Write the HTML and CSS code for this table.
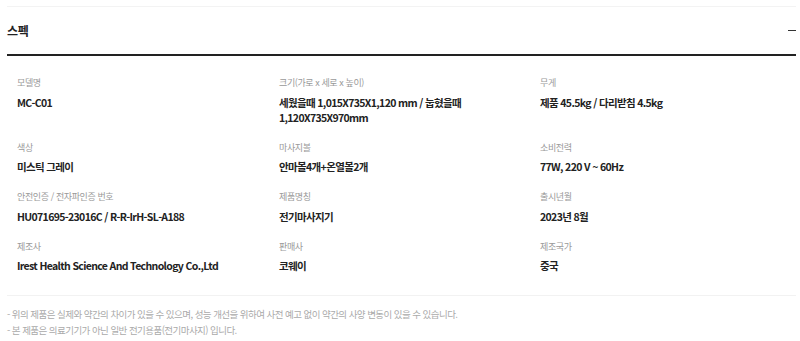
FILE: index.html
```html
<!DOCTYPE html>
<html lang="ko">
<head>
<meta charset="utf-8">
<link rel="stylesheet" href="styles.css">
</head>
<body>
<section class="spec">
  <div class="head">
    <h2 class="title">스펙</h2>
    <span class="minus"></span>
  </div>
  <div class="grid">
    <div class="item"><div class="label">모델명</div><div class="value">MC-C01</div></div>
    <div class="item"><div class="label">크기(가로 x 세로 x 높이)</div><div class="value">세웠을때 1,015X735X1,120 mm / 눕혔을때 1,120X735X970mm</div></div>
    <div class="item"><div class="label">무게</div><div class="value">제품 45.5kg / 다리받침 4.5kg</div></div>
    <div class="item"><div class="label">색상</div><div class="value">미스틱 그레이</div></div>
    <div class="item"><div class="label">마사지볼</div><div class="value">안마볼4개+온열볼2개</div></div>
    <div class="item"><div class="label">소비전력</div><div class="value">77W, 220 V ~ 60Hz</div></div>
    <div class="item"><div class="label">안전인증 / 전자파인증 번호</div><div class="value">HU071695-23016C / R-R-IrH-SL-A188</div></div>
    <div class="item"><div class="label">제품명칭</div><div class="value">전기마사지기</div></div>
    <div class="item"><div class="label">출시년월</div><div class="value">2023년 8월</div></div>
    <div class="item"><div class="label">제조사</div><div class="value">Irest Health Science And Technology Co.,Ltd</div></div>
    <div class="item"><div class="label">판매사</div><div class="value">코웨이</div></div>
    <div class="item"><div class="label">제조국가</div><div class="value">중국</div></div>
  </div>
  <ul class="notes">
    <li>- 위의 제품은 실제와 약간의 차이가 있을 수 있으며, 성능 개선을 위하여 사전 예고 없이 약간의 사양 변동이 있을 수 있습니다.</li>
    <li>- 본 제품은 의료기기가 아닌 일반 전기용품(전기마사지) 입니다.</li>
  </ul>
</section>
</body>
</html>
```

FILE: styles.css
```css
* { box-sizing: border-box; }
html, body { margin: 0; padding: 0; background: #fff; }
body {
  font-family: "Noto Sans CJK KR", "Noto Sans", sans-serif;
  color: #222;
}
.spec {
  margin: 6px 4px 0 7px;
  border-top: 1px solid #f3f3f3;
}
.head {
  height: 49px;
  display: flex;
  align-items: center;
  justify-content: space-between;
  border-bottom: 2px solid #222;
}
.title {
  margin: 0;
  font-size: 12px;
  font-weight: 700;
  letter-spacing: -0.3px;
  line-height: 16px;
  color: #222;
}
.minus {
  width: 8px;
  height: 1.5px;
  background: #333;
}
.grid {
  display: grid;
  grid-template-columns: 262px 261px 1fr;
  row-gap: 16px;
  padding: 20px 0 22px 10px;
}
.item { padding-right: 12px; }
.label {
  font-size: 9px;
  line-height: 14px;
  letter-spacing: -0.4px;
  color: #999;
}
.value {
  margin-top: 4.5px;
  font-size: 10.5px;
  line-height: 15px;
  font-weight: 700;
  letter-spacing: -0.65px;
  color: #222;
}
.notes {
  list-style: none;
  margin: 0;
  padding: 10px 0 0 0;
  border-top: 1px solid #f2f2f2;
}
.notes li {
  font-size: 9.5px;
  line-height: 16px;
  letter-spacing: -0.55px;
  color: #aaa;
}
```
